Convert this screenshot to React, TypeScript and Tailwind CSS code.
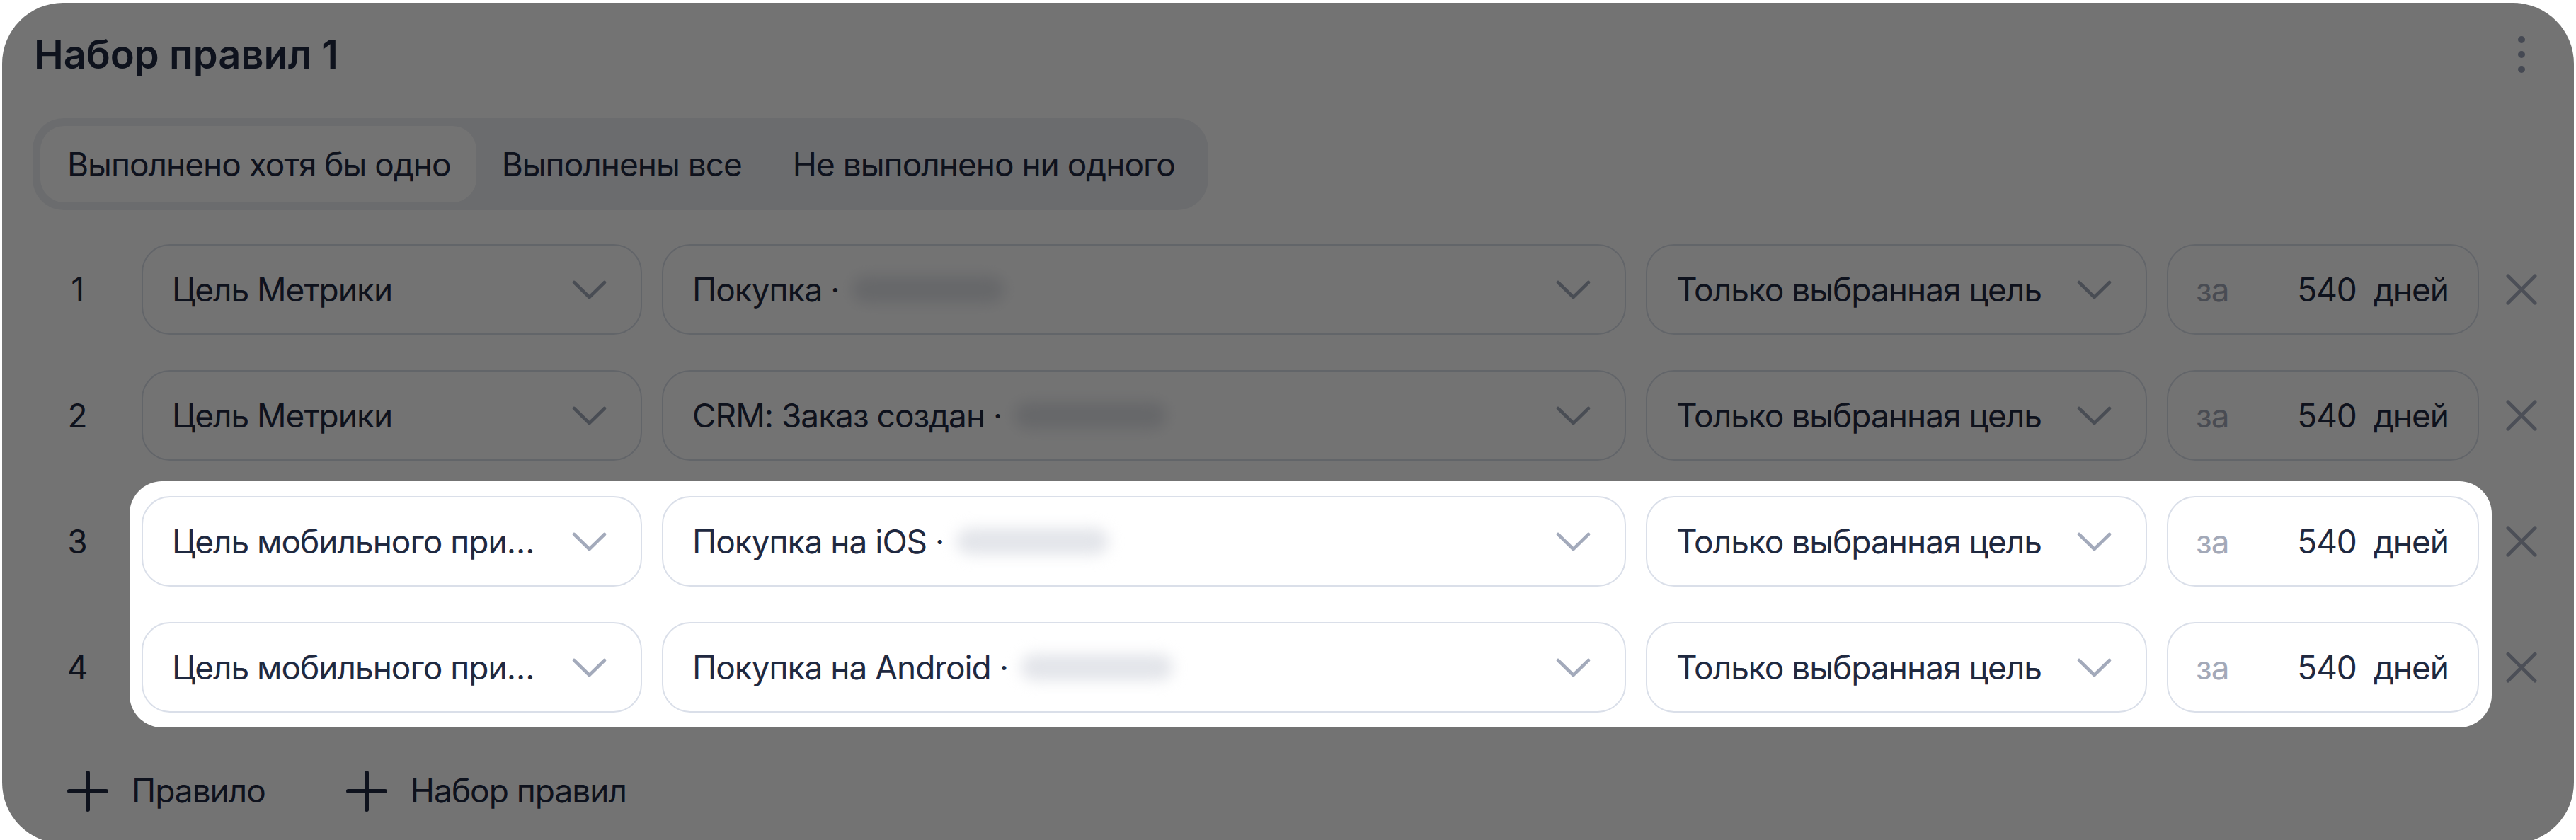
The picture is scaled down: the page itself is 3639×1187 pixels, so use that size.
import React from 'react';

type Rule = {
  id: number;
  goalType: string;
  goal: string;
};

const rules: Rule[] = [
  { id: 1, goalType: 'Цель Метрики', goal: 'Покупка ·' },
  { id: 2, goalType: 'Цель Метрики', goal: 'CRM: Заказ создан ·' },
  { id: 3, goalType: 'Цель мобильного приложения', goal: 'Покупка на iOS ·' },
  { id: 4, goalType: 'Цель мобильного приложения', goal: 'Покупка на Android ·' },
];

const tabs = ['Выполнено хотя бы одно', 'Выполнены все', 'Не выполнено ни одного'];

const Chevron = () => (
  <svg width="49" height="27" viewBox="0 0 49 27" fill="none" className="shrink-0">
    <path d="M3 3 L24.5 24 L46 3" stroke="#a3aabb" strokeWidth="4.6" strokeLinecap="round" strokeLinejoin="round" />
  </svg>
);

const Cross = () => (
  <svg width="44" height="44" viewBox="0 0 44 44" fill="none">
    <path d="M3 3 L41 41 M41 3 L3 41" stroke="#a9b0c2" strokeWidth="5" strokeLinecap="round" />
  </svg>
);

const Plus = () => (
  <svg width="58" height="58" viewBox="0 0 58 58" fill="none" className="shrink-0">
    <path d="M29 3 V55 M3 29 H55" stroke="#1f2940" strokeWidth="6" strokeLinecap="round" />
  </svg>
);

const Dots = () => (
  <svg width="10" height="52" viewBox="0 0 10 52" fill="#9aa3b8">
    <circle cx="5" cy="5" r="5" />
    <circle cx="5" cy="26" r="5" />
    <circle cx="5" cy="47" r="5" />
  </svg>
);

const SelectBox = ({ children }: { children: React.ReactNode }) => (
  <div className="flex h-[128px] min-w-0 items-center gap-[44px] rounded-[40px] border-2 border-[#dadfe9] bg-white pl-[41px] pr-[48px]">
    <div className="flex min-w-0 flex-1 items-center">{children}</div>
    <Chevron />
  </div>
);

const Hidden = () => (
  <span className="ml-[18px] h-[38px] w-[215px] shrink-0 rounded-full bg-[#e3e5ea] blur-[10px]" />
);

const RuleRow = ({ rule }: { rule: Rule }) => (
  <div className="grid grid-cols-[126px_707px_1fr_708px_441px_64px] items-center gap-x-[28px]">
    <div className="text-center">{rule.id}</div>
    <SelectBox>
      <span className="truncate">{rule.goalType}</span>
    </SelectBox>
    <SelectBox>
      <span className="whitespace-nowrap">{rule.goal}</span>
      <Hidden />
    </SelectBox>
    <SelectBox>
      <span className="whitespace-nowrap">Только выбранная цель</span>
    </SelectBox>
    <div className="flex h-[128px] items-center rounded-[40px] border-2 border-[#dadfe9] bg-white pl-[39px] pr-[41px]">
      <span className="text-[#a3a9b8]">за</span>
      <span className="ml-auto">540</span>
      <span className="ml-[24px]">дней</span>
    </div>
    <div className="flex justify-center">
      <Cross />
    </div>
  </div>
);

export default function App() {
  return (
    <div className="min-h-screen bg-white px-[3px] py-[4px] font-['Inter','Noto_Sans',sans-serif] text-[46px] tracking-[-1px] text-[#1f2940]">
      <div className="relative overflow-hidden rounded-[86px] bg-white pb-[40px] pl-[43px] pr-[42px] pt-[38px]">
        <div className="flex items-center justify-between">
          <h2 className="ml-[2px] text-[56px] font-semibold leading-[70px] tracking-normal">Набор правил 1</h2>
          <button className="flex w-[64px] justify-center">
            <Dots />
          </button>
        </div>

        {/* Condition switch */}
        <div className="mt-[55px] inline-flex rounded-[44px] bg-[#eef0f4] py-[11px] pl-[13px] pr-[11px]">
          {tabs.map((tab, i) => (
            <div
              key={tab}
              className={`flex h-[108px] items-center rounded-[34px] px-[36px] ${i === 0 ? '-ml-[2px] bg-white pl-[38px]' : ''}`}
            >
              {tab}
            </div>
          ))}
        </div>

        <div className="mt-[48px] flex flex-col gap-[50px]">
          {rules.slice(0, 2).map((rule) => (
            <RuleRow key={rule.id} rule={rule} />
          ))}
          <div className="relative flex flex-col gap-[50px]">
            {rules.slice(2).map((rule) => (
              <RuleRow key={rule.id} rule={rule} />
            ))}
            {/* Spotlight over the mobile app rules */}
            <div className="pointer-events-none absolute -bottom-[21px] -top-[21px] left-[137px] right-[74px] z-10 rounded-[46px] shadow-[0_0_0_4000px_rgba(0,0,0,0.55)]" />
          </div>
        </div>

        <div className="mt-[76px] flex items-center gap-[114px] pl-[49px]">
          <div className="flex items-center gap-[33px]">
            <Plus />
            <span>Правило</span>
          </div>
          <div className="flex items-center gap-[33px]">
            <Plus />
            <span>Набор правил</span>
          </div>
        </div>
      </div>
    </div>
  );
}
